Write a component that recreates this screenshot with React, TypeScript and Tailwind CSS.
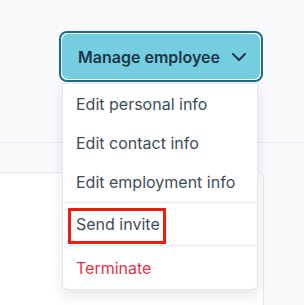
import { ChevronDown } from "lucide-react";

const items = ["Edit personal info", "Edit contact info", "Edit employment info"];

export default function App() {
  return (
    <div className="relative h-[305px] w-[304px] overflow-hidden bg-[#f8fafc] font-['Inter',sans-serif]">
      {/* header with the action button */}
      <div className="flex h-[143px] items-start border-b border-[#e6eaef] pl-[59px] pt-[31px]">
        <div className="relative rounded-lg border-2 border-[#1b6c86] bg-white p-px">
          <button className="flex h-[45px] w-[198px] items-center gap-[7px] rounded-md bg-[#75cedf] pl-[16px] text-[16px] font-semibold text-[#1c3647]">
            <span>Manage employee</span>
            <ChevronDown size={24} strokeWidth={2} />
          </button>

          {/* dropdown menu */}
          <div className="absolute left-[1px] top-[50px] w-[196px] rounded-b-md border border-[#e2e8ee] bg-white shadow-[0_6px_14px_rgba(15,23,42,0.10)]">
            <div className="flex flex-col pb-px">
              {items.map((item) => (
                <div key={item} className="flex h-[39px] items-center px-[13px] text-[16px] text-[#3c4d5b]">
                  {item}
                </div>
              ))}
            </div>
            <div className="relative flex h-[43px] items-center border-t border-[#e6ebf0] px-[13px] text-[16px] text-[#3c4d5b]">
              Send invite
              <div className="absolute left-[5px] top-[5px] h-[36px] w-[98px] border-[3px] border-[#f01d0c]" />
            </div>
            <div className="flex h-[44px] items-center border-t border-[#e6ebf0] px-[13px] text-[16px] text-[#e0364b]">
              Terminate
            </div>
          </div>
        </div>
      </div>

      {/* card behind the menu */}
      <div className="mt-[29px] h-[200px] w-[264px] rounded-tr-md border border-l-0 border-[#e3e8ee] bg-white" />
    </div>
  );
}
